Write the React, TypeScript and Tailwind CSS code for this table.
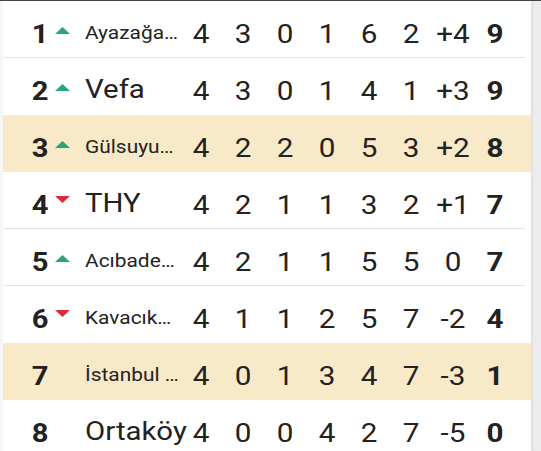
const rows = [
  { pos: 1, move: "up", team: "Ayazağa…", big: false, s: ["4", "3", "0", "1", "6", "2", "+4", "9"] },
  { pos: 2, move: "up", team: "Vefa", big: true, s: ["4", "3", "0", "1", "4", "1", "+3", "9"] },
  { pos: 3, move: "up", team: "Gülsuyu…", big: false, hl: true, s: ["4", "2", "2", "0", "5", "3", "+2", "8"] },
  { pos: 4, move: "down", team: "THY", big: true, s: ["4", "2", "1", "1", "3", "2", "+1", "7"] },
  { pos: 5, move: "up", team: "Acıbade…", big: false, s: ["4", "2", "1", "1", "5", "5", "0", "7"] },
  { pos: 6, move: "down", team: "Kavacık…", big: false, s: ["4", "1", "1", "2", "5", "7", "-2", "4"] },
  { pos: 7, move: "", team: "İstanbul …", big: false, hl: true, s: ["4", "0", "1", "3", "4", "7", "-3", "1"] },
  { pos: 8, move: "", team: "Ortaköy", big: true, s: ["4", "0", "0", "4", "2", "7", "-5", "0"] },
];

const Arrow = ({ dir }: { dir: string }) => {
  if (!dir) return <span className="w-[14px]" />;
  return (
    <svg width="15" height="7" viewBox="0 0 15 7" className={dir === "up" ? "-mt-[6px]" : "-mt-[9px]"}>
      {dir === "up" ? (
        <polygon points="7.5,0 15,7 0,7" fill="#27a67c" />
      ) : (
        <polygon points="0,0 15,0 7.5,7" fill="#dc2a36" />
      )}
    </svg>
  );
};

export default function App() {
  return (
    <div
      className="w-[541px] h-[451px] overflow-hidden bg-[#f4f4f4] flex flex-col text-[#222]"
      style={{ fontFamily: "Roboto, 'Noto Sans', sans-serif" }}
    >
      <div className="h-px bg-[#444] shrink-0" />
      <div className="flex flex-1 min-h-0">
        <div className="w-[3px] bg-[#f6f6f6]" />
        <div className="w-[528px] bg-white flex flex-col">
          {rows.map((r, i) => {
            const next = rows[i + 1];
            const line = !r.hl && next && !next.hl;
            return (
              <div
                key={r.pos}
                className={`h-[57px] shrink-0 flex items-center pt-[8px] relative ${r.hl ? "bg-[#f8e9c8]" : ""}`}
              >
                <span className="w-[46px] text-right pr-[3px] text-[26px] font-bold leading-none scale-x-[1.12]">
                  {r.pos}
                </span>
                <span className="w-[21px] flex justify-end">
                  <Arrow dir={r.move} />
                </span>
                <span className="w-[15px]" />
                <span className="w-[95px] overflow-visible whitespace-nowrap">
                  <span
                    className={`inline-block origin-left leading-none ${
                      r.big ? "text-[26px] scale-x-[1.13]" : "text-[19px] scale-x-[1.1] -mt-[3px]"
                    }`}
                  >
                    {r.team}
                  </span>
                </span>
                {r.s.map((v, j) => (
                  <span
                    key={j}
                    className={`w-[42px] text-center text-[26px] leading-none scale-x-[1.14] ${
                      j === 7 ? "font-bold" : ""
                    }`}
                  >
                    {v}
                  </span>
                ))}
                {line && <div className="absolute left-[1px] right-[6px] bottom-0 h-px bg-[#e2e2e2]" />}
              </div>
            );
          })}
        </div>
        <div className="flex-1 bg-[#ececec] shadow-[inset_3px_0_3px_-2px_rgba(0,0,0,0.08)]" />
      </div>
    </div>
  );
}
